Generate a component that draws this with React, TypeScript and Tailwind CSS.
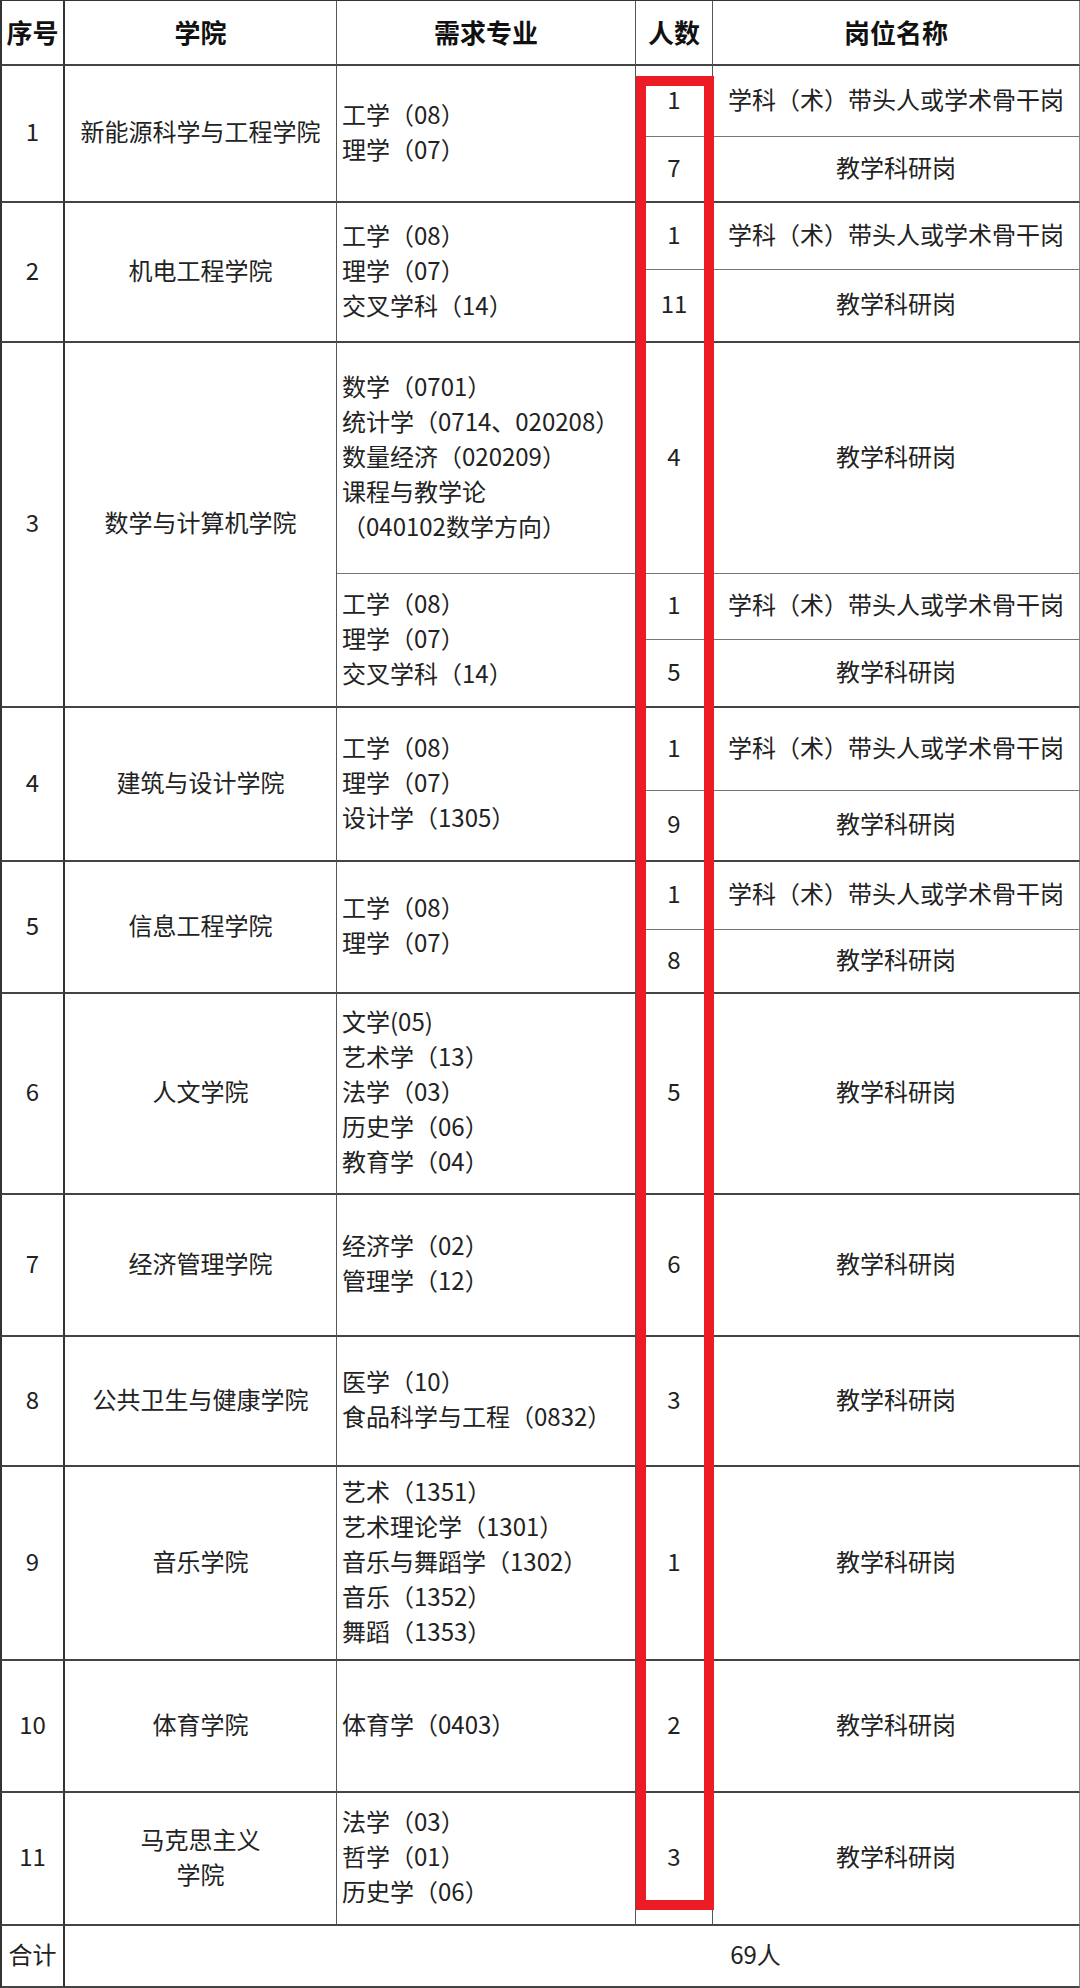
import React from "react";

type Slot = { n: string; post: string };
type Part = { majors: string[]; slots: Slot[] };
type Group = { no: string; college: string[]; parts: Part[] };

const LEAD = "学科（术）带头人或学术骨干岗";
const TEACH = "教学科研岗";

const groups: Group[] = [
  {
    no: "1",
    college: ["新能源科学与工程学院"],
    parts: [
      {
        majors: ["工学（08）", "理学（07）"],
        slots: [
          { n: "1", post: LEAD },
          { n: "7", post: TEACH },
        ],
      },
    ],
  },
  {
    no: "2",
    college: ["机电工程学院"],
    parts: [
      {
        majors: ["工学（08）", "理学（07）", "交叉学科（14）"],
        slots: [
          { n: "1", post: LEAD },
          { n: "11", post: TEACH },
        ],
      },
    ],
  },
  {
    no: "3",
    college: ["数学与计算机学院"],
    parts: [
      {
        majors: [
          "数学（0701）",
          "统计学（0714、020208）",
          "数量经济（020209）",
          "课程与教学论",
          "（040102数学方向）",
        ],
        slots: [{ n: "4", post: TEACH }],
      },
      {
        majors: ["工学（08）", "理学（07）", "交叉学科（14）"],
        slots: [
          { n: "1", post: LEAD },
          { n: "5", post: TEACH },
        ],
      },
    ],
  },
  {
    no: "4",
    college: ["建筑与设计学院"],
    parts: [
      {
        majors: ["工学（08）", "理学（07）", "设计学（1305）"],
        slots: [
          { n: "1", post: LEAD },
          { n: "9", post: TEACH },
        ],
      },
    ],
  },
  {
    no: "5",
    college: ["信息工程学院"],
    parts: [
      {
        majors: ["工学（08）", "理学（07）"],
        slots: [
          { n: "1", post: LEAD },
          { n: "8", post: TEACH },
        ],
      },
    ],
  },
  {
    no: "6",
    college: ["人文学院"],
    parts: [
      {
        majors: ["文学(05)", "艺术学（13）", "法学（03）", "历史学（06）", "教育学（04）"],
        slots: [{ n: "5", post: TEACH }],
      },
    ],
  },
  {
    no: "7",
    college: ["经济管理学院"],
    parts: [{ majors: ["经济学（02）", "管理学（12）"], slots: [{ n: "6", post: TEACH }] }],
  },
  {
    no: "8",
    college: ["公共卫生与健康学院"],
    parts: [{ majors: ["医学（10）", "食品科学与工程（0832）"], slots: [{ n: "3", post: TEACH }] }],
  },
  {
    no: "9",
    college: ["音乐学院"],
    parts: [
      {
        majors: ["艺术（1351）", "艺术理论学（1301）", "音乐与舞蹈学（1302）", "音乐（1352）", "舞蹈（1353）"],
        slots: [{ n: "1", post: TEACH }],
      },
    ],
  },
  {
    no: "10",
    college: ["体育学院"],
    parts: [{ majors: ["体育学（0403）"], slots: [{ n: "2", post: TEACH }] }],
  },
  {
    no: "11",
    college: ["马克思主义", "学院"],
    parts: [{ majors: ["法学（03）", "哲学（01）", "历史学（06）"], slots: [{ n: "3", post: TEACH }] }],
  },
];

const spans: Record<number, string> = {
  1: "row-span-1",
  2: "row-span-2",
  3: "row-span-3",
};

const base = "flex items-center text-[24px] leading-[35px] text-[#222] pb-[6px]";
const head = "flex items-center justify-center text-[26px] font-bold text-[#111] pb-[2px]";
const firstCol = "border-l-2 border-l-[#333] border-r-2 border-r-[#333]";
const midCol = "border-r border-r-[#555]";
const lastCol = "border-r border-r-[#888]";
const mainLine = "border-b-2 border-b-[#444]";
const subLine = "border-b border-b-[#777]";

export default function App() {
  const cells: React.ReactNode[] = [];

  groups.forEach((g) => {
    const total = g.parts.reduce((acc, p) => acc + p.slots.length, 0);
    cells.push(
      <div key={`no-${g.no}`} className={`${base} ${spans[total]} ${firstCol} ${mainLine} justify-center`}>
        {g.no}
      </div>
    );
    cells.push(
      <div
        key={`col-${g.no}`}
        className={`${base} ${spans[total]} ${midCol} ${mainLine} flex-col justify-center text-center`}
      >
        {g.college.map((line) => (
          <span key={line}>{line}</span>
        ))}
      </div>
    );
    g.parts.forEach((p, pi) => {
      const lastPart = pi === g.parts.length - 1;
      p.slots.forEach((s, si) => {
        const lastRow = lastPart && si === p.slots.length - 1;
        if (si === 0) {
          cells.push(
            <div
              key={`maj-${g.no}-${pi}`}
              className={`${base} ${spans[p.slots.length]} ${midCol} ${lastPart ? mainLine : subLine} flex-col items-start justify-center pl-[5px] whitespace-nowrap`}
            >
              {p.majors.map((m) => (
                <span key={m}>{m}</span>
              ))}
            </div>
          );
        }
        cells.push(
          <div
            key={`n-${g.no}-${pi}-${si}`}
            className={`${base} ${midCol} ${lastRow ? mainLine : subLine} justify-center`}
          >
            {s.n}
          </div>
        );
        cells.push(
          <div
            key={`p-${g.no}-${pi}-${si}`}
            className={`${base} ${lastCol} ${lastRow ? mainLine : subLine} justify-center whitespace-nowrap`}
          >
            {s.post}
          </div>
        );
      });
    });
  });

  return (
    <div className="w-[1080px] h-[1988px] bg-white font-['Noto_Sans_CJK_SC','Microsoft_YaHei',sans-serif]">
      <div className="relative">
        <div className="grid grid-cols-[65px_272px_299px_77px_367px] grid-rows-[65px_71px_66px_67px_73px_231px_66px_68px_83px_71px_68px_64px_201px_142px_130px_194px_132px_133px_62px] border-t border-t-[#333]">
          {/* header */}
          <div className={`${head} ${firstCol} ${mainLine}`}>序号</div>
          <div className={`${head} ${midCol} ${mainLine}`}>学院</div>
          <div className={`${head} ${midCol} ${mainLine}`}>需求专业</div>
          <div className={`${head} ${midCol} ${mainLine}`}>人数</div>
          <div className={`${head} ${lastCol} ${mainLine}`}>岗位名称</div>

          {cells}

          {/* total */}
          <div className={`${base} ${firstCol} ${mainLine} justify-center`}>合计</div>
          <div className={`${base} col-span-4 ${lastCol} ${mainLine} justify-center pl-[367px]`}>69人</div>
        </div>

        {/* red highlight around 人数 column */}
        <div className="absolute left-[636px] top-[76px] w-[78px] h-[1834px] border-[10px] border-[#ec1c24]" />
      </div>
    </div>
  );
}
